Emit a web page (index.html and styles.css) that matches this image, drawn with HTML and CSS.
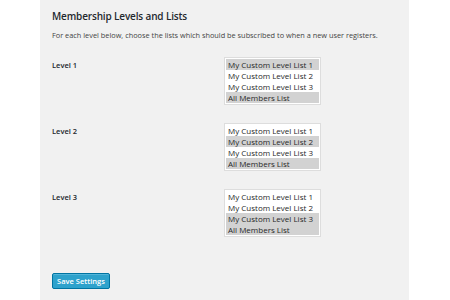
FILE: index.html
```html
<!DOCTYPE html>
<html lang="en">
<head>
    <meta charset="UTF-8">
    <title>Membership Levels and Lists</title>
    <link rel="stylesheet" href="styles.css">
</head>
<body>
    <div class="wrap">
        <h2 class="title">Membership Levels and Lists</h2>
        <p class="desc">For each level below, choose the lists which should be subscribed to when a new user registers.</p>
        <div class="levels">
            <div class="level">
                <span class="level-name">Level 1</span>
                <ul class="listbox">
                    <li class="selected">My Custom Level List 1</li>
                    <li>My Custom Level List 2</li>
                    <li>My Custom Level List 3</li>
                    <li class="selected">All Members List</li>
                </ul>
            </div>
            <div class="level">
                <span class="level-name">Level 2</span>
                <ul class="listbox">
                    <li>My Custom Level List 1</li>
                    <li class="selected">My Custom Level List 2</li>
                    <li>My Custom Level List 3</li>
                    <li class="selected">All Members List</li>
                </ul>
            </div>
            <div class="level">
                <span class="level-name">Level 3</span>
                <ul class="listbox">
                    <li>My Custom Level List 1</li>
                    <li>My Custom Level List 2</li>
                    <li class="selected">My Custom Level List 3</li>
                    <li class="selected">All Members List</li>
                </ul>
            </div>
        </div>
        <input class="save" type="button" value="Save Settings" />
    </div>
</body>
</html>
```
FILE: styles.css
```css
body{
    margin: 0;
    background-color: white;
    font-family: "Open Sans", "Liberation Sans", sans-serif;
}
.wrap{
    width: 369px;
    height: 300px;
    margin-left: 40px;
    padding: 8px 12px 0 12px;
    box-sizing: border-box;
    background-color: rgb(241,241,241);
}
h2.title{
    font-size: 10px;
    font-weight: 600;
    letter-spacing: -0.15px;
    line-height: 16px;
    color: rgb(35,40,45);
    margin: 0;
}
p.desc{
    font-size: 7.35px;
    line-height: 12px;
    color: rgb(68,68,68);
    margin: 5px 0 0 0;
}
.levels{
    margin-top: 16px;
}
.level{
    display: grid;
    grid-template-columns: 172px 97px;
    margin-bottom: 18px;
}
.level-name{
    font-size: 7.5px;
    font-weight: 600;
    line-height: 12px;
    color: rgb(35,40,45);
    padding-top: 2px;
}
ul.listbox{
    list-style-type: none;
    margin: 0;
    padding: 1px;
    background-color: white;
    border: 1px solid rgb(221,221,221);
}
ul.listbox li{
    font-size: 8px;
    line-height: 11px;
    height: 11px;
    padding-left: 2px;
    color: rgb(40,40,40);
    white-space: nowrap;
}
ul.listbox li.selected{
    background-color: rgb(210,210,210);
}
input.save{
    margin-top: 18px;
    width: 58px;
    height: 16px;
    padding: 0;
    border: 1px solid rgb(0,116,162);
    border-radius: 2px;
    background-color: rgb(46,162,204);
    box-shadow: inset 0 1px 0 rgba(120,200,230,0.5);
    color: white;
    font-family: "Open Sans", "Liberation Sans", sans-serif;
    font-size: 7.5px;
    font-weight: 600;
}
```
